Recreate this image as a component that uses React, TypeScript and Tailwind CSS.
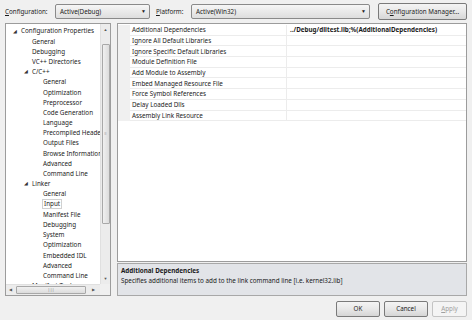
import React from 'react';

const treeItems: { label: string; level: number; expanded?: boolean; selected?: boolean }[] = [
  { label: 'Configuration Properties', level: 0, expanded: true },
  { label: 'General', level: 1 },
  { label: 'Debugging', level: 1 },
  { label: 'VC++ Directories', level: 1 },
  { label: 'C/C++', level: 1, expanded: true },
  { label: 'General', level: 2 },
  { label: 'Optimization', level: 2 },
  { label: 'Preprocessor', level: 2 },
  { label: 'Code Generation', level: 2 },
  { label: 'Language', level: 2 },
  { label: 'Precompiled Headers', level: 2 },
  { label: 'Output Files', level: 2 },
  { label: 'Browse Information', level: 2 },
  { label: 'Advanced', level: 2 },
  { label: 'Command Line', level: 2 },
  { label: 'Linker', level: 1, expanded: true },
  { label: 'General', level: 2 },
  { label: 'Input', level: 2, selected: true },
  { label: 'Manifest File', level: 2 },
  { label: 'Debugging', level: 2 },
  { label: 'System', level: 2 },
  { label: 'Optimization', level: 2 },
  { label: 'Embedded IDL', level: 2 },
  { label: 'Advanced', level: 2 },
  { label: 'Command Line', level: 2 },
  { label: 'Manifest Tool', level: 1, expanded: true },
];

const properties = [
  { name: 'Additional Dependencies', value: '../Debug/dlltest.lib;%(AdditionalDependencies)' },
  { name: 'Ignore All Default Libraries', value: '' },
  { name: 'Ignore Specific Default Libraries', value: '' },
  { name: 'Module Definition File', value: '' },
  { name: 'Add Module to Assembly', value: '' },
  { name: 'Embed Managed Resource File', value: '' },
  { name: 'Force Symbol References', value: '' },
  { name: 'Delay Loaded Dlls', value: '' },
  { name: 'Assembly Link Resource', value: '' },
];

const indent = ['pl-[7px]', 'pl-[18px]', 'pl-[29px]'];

function Combo({ text, className }: { text: string; className: string }) {
  return (
    <div
      className={`flex h-[15px] items-center justify-between rounded-[2px] border border-[#8a8a8a] bg-gradient-to-b from-[#f6f6f6] to-[#dedede] pl-[4px] pr-[3px] ${className}`}
    >
      <span>{text}</span>
      <span className="text-[5px] text-[#222]">▼</span>
    </div>
  );
}

function Button({ children, className, disabled }: { children: React.ReactNode; className: string; disabled?: boolean }) {
  return (
    <div
      className={`flex items-center justify-center rounded-[2px] border ${
        disabled
          ? 'border-[#c4c4c4] bg-[#f4f4f4] text-[#a0a0a0]'
          : 'border-[#7a7a7a] bg-gradient-to-b from-[#f4f4f4] via-[#e8e8e8] to-[#d6d6d6]'
      } ${className}`}
    >
      {children}
    </div>
  );
}

export default function App() {
  return (
    <div
      className="relative h-[320px] w-[472px] overflow-hidden bg-[#f0f0f0] text-[6.3px] text-[#1b1b1b]"
      style={{ fontFamily: '"Noto Sans", "Open Sans", sans-serif' }}
    >
      {/* top bar */}
      <div className="flex h-[23px] items-center pl-[5px] pr-[5px]">
        <span className="w-[50px]">
          <u>C</u>onfiguration:
        </span>
        <Combo text="Active(Debug)" className="w-[95px]" />
        <span className="ml-[6px] w-[35px]">
          <u>P</u>latform:
        </span>
        <Combo text="Active(Win32)" className="w-[179px]" />
        <Button className="ml-[8px] h-[17px] w-[89px]">
          <span>
            C<u>o</u>nfiguration Manager...
          </span>
        </Button>
      </div>

      <div className="flex h-[273px] gap-[6px] pl-[5px] pr-[5px]">
        {/* tree */}
        <div className="relative h-[273px] w-[106px] overflow-hidden border border-[#9c9c9c] bg-white">
          <div className="h-[261px] w-[95px] overflow-hidden pt-[2px]">
            {treeItems.map((item, i) => (
              <div key={i} className={`flex h-[10.2px] items-center whitespace-nowrap ${indent[item.level]}`}>
                <span className="w-[7px] shrink-0 text-[5px] leading-none text-[#333]">{item.expanded ? '◢' : ''}</span>
                <span className={item.selected ? 'shrink-0 border border-[#d0d0d0] px-[1px] leading-[8px]' : 'shrink-0 px-[1px]'}>
                  {item.label}
                </span>
              </div>
            ))}
          </div>
          {/* vertical scrollbar */}
          <div className="absolute right-0 top-0 flex h-[261px] w-[10px] flex-col items-center border-l border-[#e0e0e0] bg-[#ececec]">
            <span className="mt-[3px] text-[4px] text-[#555]">▲</span>
            <div className="mt-[11px] flex h-[180px] w-[8px] items-center justify-center rounded-[1px] border border-[#a8a8a8] bg-gradient-to-r from-[#f0f0f0] to-[#dcdcdc]">
              <span className="text-[4px] leading-none text-[#777]">≡</span>
            </div>
            <span className="mt-auto mb-[3px] text-[4px] text-[#555]">▼</span>
          </div>
          {/* horizontal scrollbar */}
          <div className="absolute bottom-0 left-0 flex h-[11px] w-[96px] items-center border-t border-[#e0e0e0] bg-[#ececec]">
            <span className="ml-[3px] text-[4px] text-[#555]">◀</span>
            <div className="ml-[4px] flex h-[8px] w-[70px] items-center justify-center rounded-[1px] border border-[#a8a8a8] bg-gradient-to-b from-[#f0f0f0] to-[#dcdcdc]">
              <span className="text-[4px] leading-none text-[#777]">|||</span>
            </div>
            <span className="ml-[6px] text-[4px] text-[#555]">▶</span>
          </div>
          <div className="absolute bottom-0 right-0 h-[11px] w-[10px] bg-[#f0f0f0]" />
        </div>

        {/* right side */}
        <div className="flex w-[350px] flex-col">
          <div className="h-[239px] border border-[#9c9c9c] bg-white pt-[1px]">
            {properties.map((p, i) => (
              <div key={i} className="flex h-[10.7px] items-center">
                <div className="h-full w-[12px] bg-[#f0f0f0]" />
                <div className="flex h-full w-[156px] items-center border-b border-[#ececec] pl-[2px] whitespace-nowrap">
                  {p.name}
                </div>
                <div className="flex h-full flex-1 items-center border-b border-l border-[#ececec] pl-[3px] font-bold whitespace-nowrap">
                  {p.value}
                </div>
              </div>
            ))}
          </div>
          <div className="mt-[1px] h-[33px] border border-[#a8a8a8] bg-[#e2e4e8] px-[3px] pt-[2px] leading-[10px]">
            <div className="font-bold">Additional Dependencies</div>
            <div>Specifies additional items to add to the link command line [i.e. kernel32.lib]</div>
          </div>
        </div>
      </div>

      {/* buttons */}
      <div className="flex justify-end gap-[4px] pr-[5px] pt-[5px]">
        <Button className="h-[16px] w-[44px]">OK</Button>
        <Button className="h-[16px] w-[44px]">Cancel</Button>
        <Button disabled className="h-[16px] w-[35px]">
          <span>
            <u>A</u>pply
          </span>
        </Button>
      </div>
    </div>
  );
}
